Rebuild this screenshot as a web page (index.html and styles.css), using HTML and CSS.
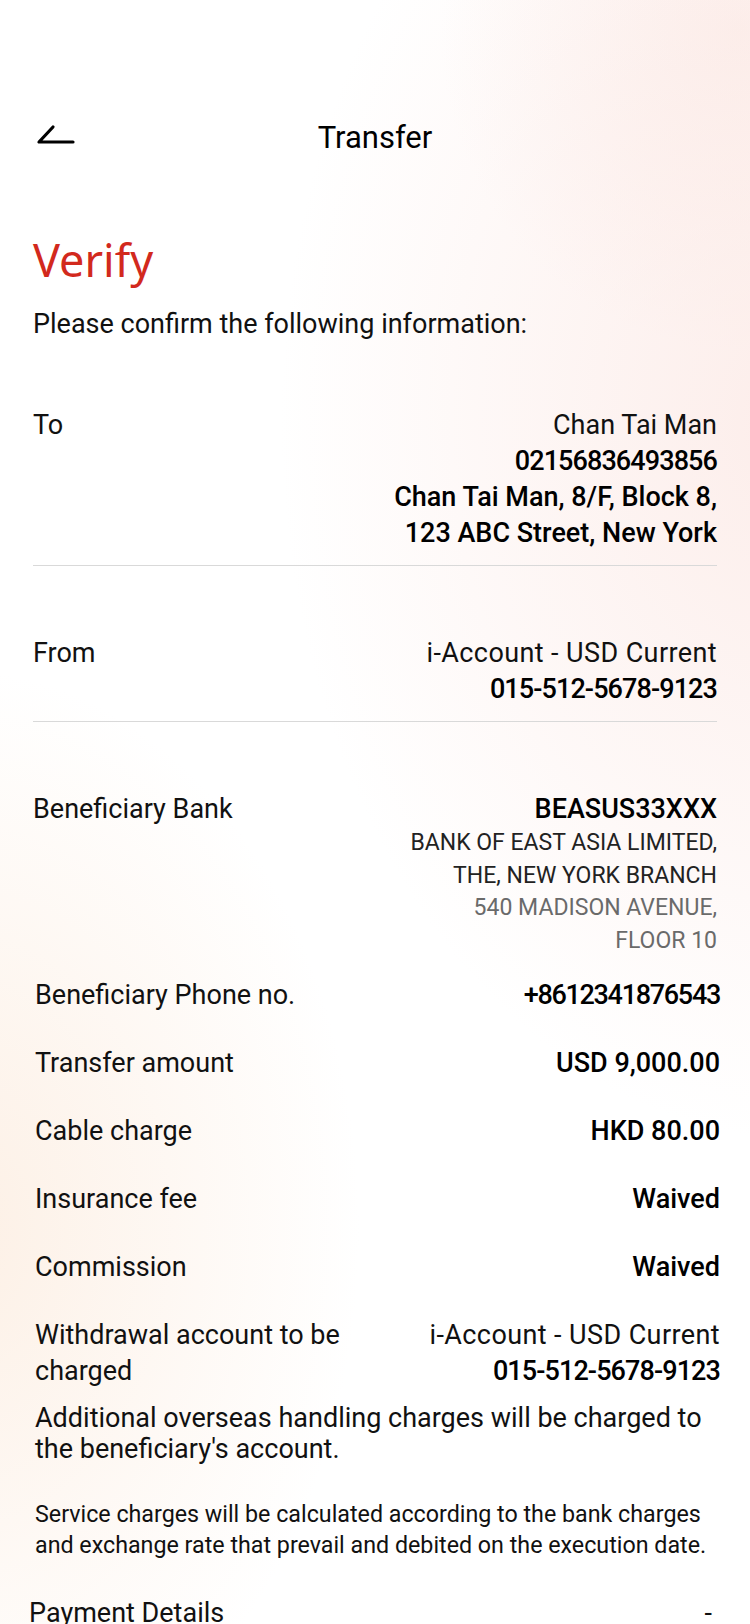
FILE: index.html
```html
<!DOCTYPE html>
<html lang="en">
<head>
<meta charset="utf-8">
<title>Transfer - Verify</title>
<link rel="stylesheet" href="styles.css">
</head>
<body>
<div class="screen">
  <header class="nav">
    <button class="back" aria-label="Back">
      <svg width="44" height="26" viewBox="0 0 44 26"><path d="M17 5 L3 20 H37" fill="none" stroke="#000" stroke-width="3.2" stroke-linecap="round" stroke-linejoin="round"/></svg>
    </button>
    <h1 class="nav-title">Transfer</h1>
  </header>

  <main class="content">
    <h2 class="title">Verify</h2>
    <p class="intro">Please confirm the following information:</p>

    <section class="group">
      <div class="row">
        <div class="label">To</div>
        <div class="value">
          <div>Chan Tai Man</div>
          <div class="strong num">02156836493856</div>
          <div class="strong">Chan Tai Man, 8/F, Block 8,</div>
          <div class="strong">123 ABC Street, New York</div>
        </div>
      </div>
    </section>

    <section class="group">
      <div class="row">
        <div class="label">From</div>
        <div class="value">
          <div class="acct">i-Account - USD Current</div>
          <div class="strong num">015-512-5678-9123</div>
        </div>
      </div>
    </section>

    <section class="group group-plain">
      <div class="row">
        <div class="label">Beneficiary Bank</div>
        <div class="value">
          <div class="strong">BEASUS33XXX</div>
          <div class="small">BANK OF EAST ASIA LIMITED,</div>
          <div class="small">THE, NEW YORK BRANCH</div>
          <div class="small muted">540 MADISON AVENUE,</div>
          <div class="small muted">FLOOR 10</div>
        </div>
      </div>
    </section>

    <section class="details">
      <div class="drow"><div class="label">Beneficiary Phone no.</div><div class="value strong num num-tight">+8612341876543</div></div>
      <div class="drow"><div class="label">Transfer amount</div><div class="value strong">USD 9,000.00</div></div>
      <div class="drow"><div class="label">Cable charge</div><div class="value strong">HKD 80.00</div></div>
      <div class="drow"><div class="label">Insurance fee</div><div class="value strong">Waived</div></div>
      <div class="drow"><div class="label">Commission</div><div class="value strong">Waived</div></div>
      <div class="drow wide">
        <div class="label">Withdrawal account to be charged</div>
        <div class="value">
          <div class="acct">i-Account - USD Current</div>
          <div class="strong num">015-512-5678-9123</div>
        </div>
      </div>
      <p class="note">Additional overseas handling charges will be charged to the beneficiary's account.</p>
      <p class="fine">Service charges will be calculated according to the bank charges and exchange rate that prevail and debited on the execution date.</p>
    </section>

    <div class="payment">
      <div class="label">Payment Details</div>
      <div class="value">-</div>
    </div>
  </main>
</div>
</body>
</html>
```
FILE: styles.css
```css
* { box-sizing: border-box; }

html, body {
  margin: 0;
  padding: 0;
}

body {
  width: 750px;
  height: 1624px;
  overflow: hidden;
  font-family: Roboto, "Liberation Sans", sans-serif;
  color: #111;
  background:
    radial-gradient(ellipse 520px 720px at 800px 420px, rgba(250, 222, 216, 0.55), rgba(250, 222, 216, 0) 100%),
    radial-gradient(ellipse 300px 320px at 740px 30px, rgba(250, 226, 220, 0.45), rgba(250, 226, 220, 0) 100%),
    radial-gradient(ellipse 400px 560px at -40px 1230px, rgba(251, 230, 212, 0.6), rgba(251, 230, 212, 0) 100%),
    #fff;
}

.screen {
  padding-top: 108px;
}

.nav {
  position: relative;
  height: 56px;
  display: flex;
  align-items: center;
  justify-content: center;
}

.back {
  position: absolute;
  left: 36px;
  top: 14px;
  padding: 0;
  margin: 0;
  border: 0;
  background: none;
  width: 44px;
  height: 26px;
}

.back svg { display: block; }

.nav-title {
  margin: 0;
  padding-top: 4px;
  font-size: 31px;
  font-weight: 400;
  line-height: 56px;
  color: #000;
}

.content {
  padding: 0 33px;
}

.title {
  margin: 68px 0 0;
  font-family: "Noto Sans", "Open Sans", sans-serif;
  font-weight: 400;
  font-size: 45px;
  line-height: 56px;
  color: #d2291d;
}

.intro {
  margin: 18px 0 0;
  font-size: 27px;
  line-height: 36px;
  font-weight: 400;
  color: #111;
}

.group {
  border-bottom: 1px solid #d9d9d9;
  padding: 69px 0 14px;
}

.group:first-of-type {
  padding-top: 65px;
}

.group-plain {
  border-bottom: 0;
  padding: 69px 0 0;
}

.row {
  display: flex;
  justify-content: space-between;
  gap: 20px;
}

.label {
  font-size: 27px;
  line-height: 36px;
  font-weight: 400;
  color: #111;
}

.value {
  text-align: right;
  font-size: 27px;
  line-height: 36px;
  font-weight: 400;
  color: #111;
}

.strong { font-weight: 500; color: #000; }

.num { letter-spacing: -0.9px; }

.num-tight { letter-spacing: -1.3px; }

.acct { letter-spacing: 0.4px; }

.value .small {
  font-size: 23px;
  line-height: 32.5px;
  font-weight: 400;
  color: #222;
}

.value .muted { color: #6a6a6a; }

.details {
  margin: 20px -3px 0 2px;
  display: flex;
  flex-direction: column;
}

.drow {
  display: flex;
  justify-content: space-between;
  gap: 20px;
  margin-bottom: 32px;
}

.drow.wide { margin-bottom: 14px; }

.drow.wide .label { width: 320px; }

.note {
  margin: 0;
  font-size: 27px;
  line-height: 31px;
  font-weight: 400;
}

.fine {
  margin: 34px 0 0;
  font-size: 23.25px;
  line-height: 31px;
  font-weight: 400;
}

.payment {
  display: flex;
  justify-content: space-between;
  margin: 34px 5px 0 -4px;
}
```
